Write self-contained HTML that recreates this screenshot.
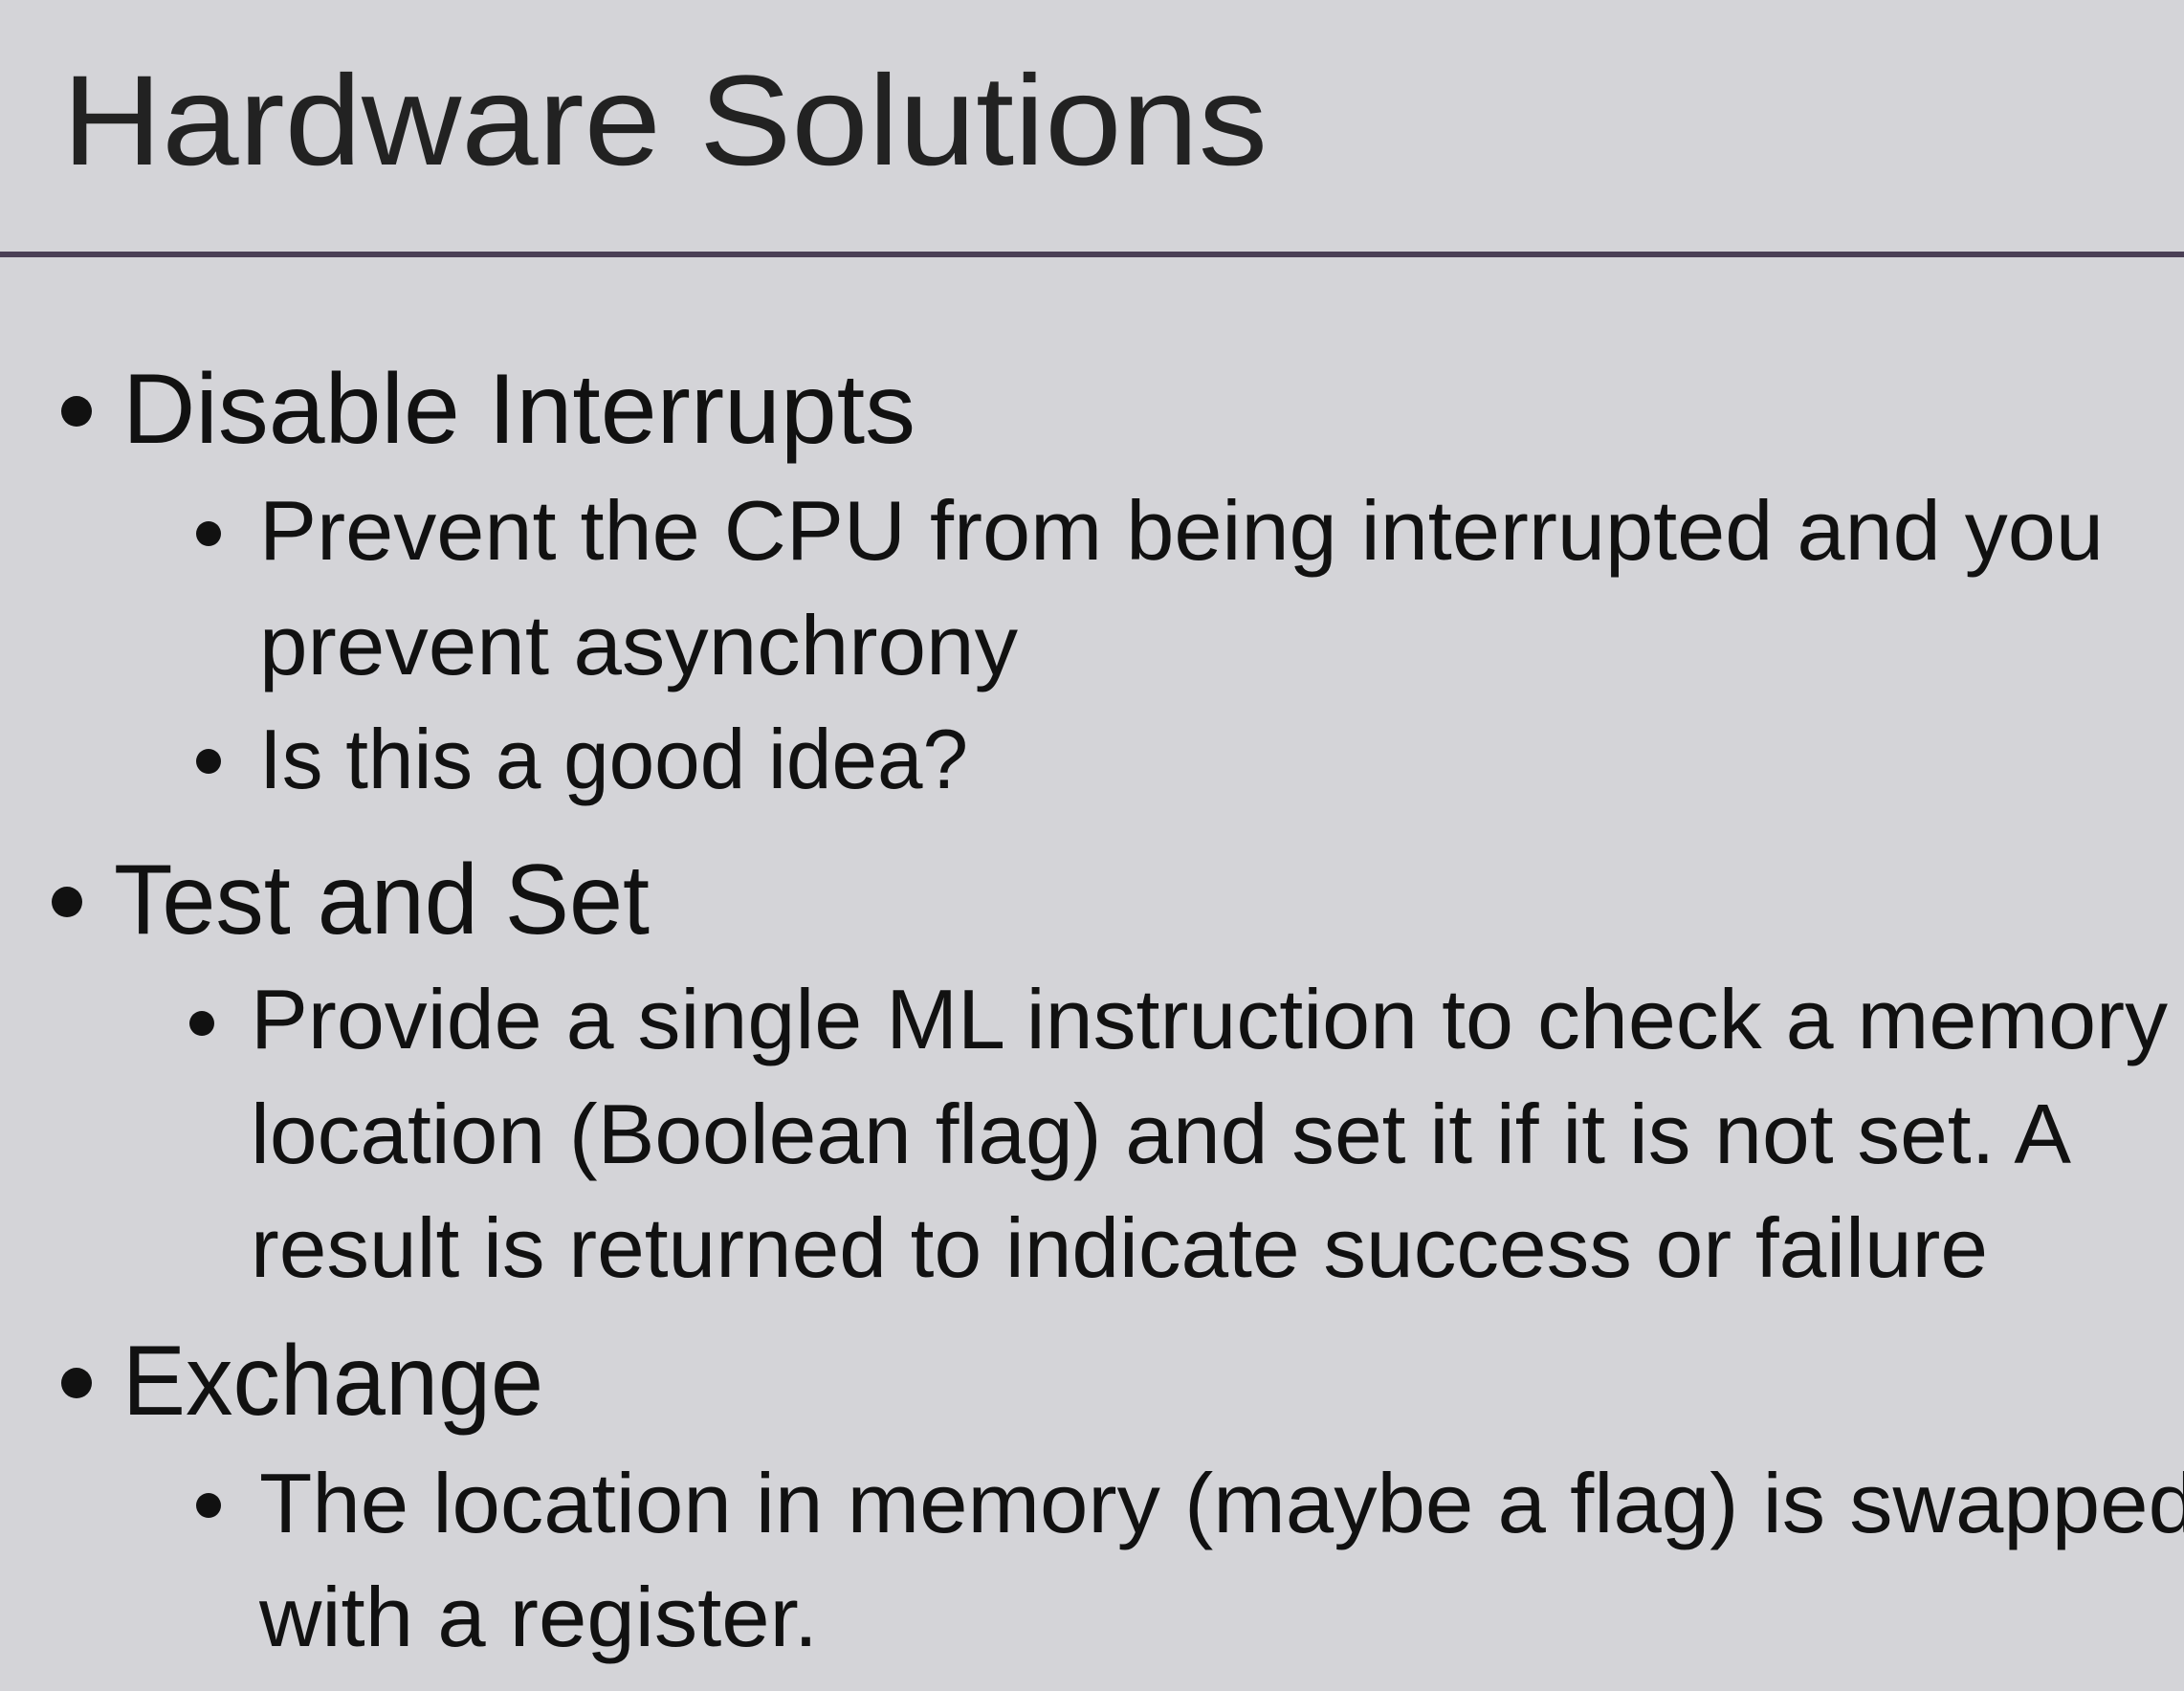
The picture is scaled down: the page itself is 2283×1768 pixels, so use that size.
<!DOCTYPE html>
<html><head><meta charset="utf-8"><style>
html,body{margin:0;padding:0;background:#d4d4d8;}
svg{display:block;}
text{font-family:"Liberation Sans",sans-serif;fill:#111;}
</style></head><body>
<svg width="2283" height="1768" viewBox="0 0 2283 1768" xmlns="http://www.w3.org/2000/svg">
<rect width="2283" height="1768" fill="#d4d4d8"/>
<text x="65" y="172" font-size="134" textLength="1260" lengthAdjust="spacingAndGlyphs" style="fill:#222">Hardware Solutions</text>
<rect x="0" y="263" width="2283" height="6" fill="#4a3f55"/>
<circle cx="80" cy="430" r="16" fill="#111"/>
<text x="128" y="463" font-size="104" textLength="829" lengthAdjust="spacingAndGlyphs">Disable Interrupts</text>
<circle cx="218" cy="558" r="13" fill="#111"/>
<text x="271" y="585" font-size="88" textLength="1928" lengthAdjust="spacingAndGlyphs">Prevent the CPU from being interrupted and you</text>
<text x="271" y="705" font-size="88" textLength="793" lengthAdjust="spacingAndGlyphs">prevent asynchrony</text>
<circle cx="218" cy="796" r="13" fill="#111"/>
<text x="271" y="824" font-size="88" textLength="741" lengthAdjust="spacingAndGlyphs">Is this a good idea?</text>
<circle cx="70" cy="943" r="16" fill="#111"/>
<text x="119" y="976" font-size="104" textLength="560" lengthAdjust="spacingAndGlyphs">Test and Set</text>
<circle cx="211" cy="1070" r="13" fill="#111"/>
<text x="262" y="1096" font-size="88" textLength="2004" lengthAdjust="spacingAndGlyphs">Provide a single ML instruction to check a memory</text>
<text x="262" y="1216" font-size="88" textLength="1903" lengthAdjust="spacingAndGlyphs">location (Boolean flag) and set it if it is not set. A</text>
<text x="262" y="1335" font-size="88" textLength="1816" lengthAdjust="spacingAndGlyphs">result is returned to indicate success or failure</text>
<circle cx="80" cy="1446" r="16" fill="#111"/>
<text x="128" y="1479" font-size="104" textLength="440" lengthAdjust="spacingAndGlyphs">Exchange</text>
<circle cx="218" cy="1574" r="13" fill="#111"/>
<text x="271" y="1602" font-size="88" textLength="2025" lengthAdjust="spacingAndGlyphs">The location in memory (maybe a flag) is swapped</text>
<text x="271" y="1721" font-size="88" textLength="584" lengthAdjust="spacingAndGlyphs">with a register.</text>
</svg>
</body></html>
